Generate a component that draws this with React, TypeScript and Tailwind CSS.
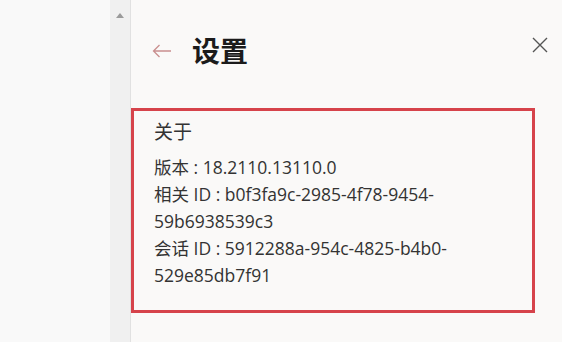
import React from "react";

const font = { fontFamily: '"Open Sans", "Noto Sans CJK SC", sans-serif' };

const rows = [
  "版本 : 18.2110.13110.0",
  "相关 ID : b0f3fa9c-2985-4f78-9454-",
  "59b6938539c3",
  "会话 ID : 5912288a-954c-4825-b4b0-",
  "529e85db7f91",
];

export default function App() {
  return (
    <div className="flex h-[342px] w-[562px] overflow-hidden bg-[#f8f8f8]" style={font}>
      <div className="w-[110px] bg-[#f9f9f9]" />
      {/* scrollbar */}
      <div className="flex w-[20px] justify-center bg-[#f0f0f0] pt-[13px]">
        <div className="h-0 w-0 border-x-[4px] border-b-[5px] border-x-transparent border-b-[#9a9a9a]" />
      </div>
      <div className="flex-1 border-l border-[#e1e1e1] bg-[#faf9f8]">
        <div className="flex items-center pl-[21px] pr-[13px] pt-[34px]">
          <svg width="20" height="14" viewBox="0 0 20 14" fill="none" stroke="#c98f8f" strokeWidth="1.3">
            <path d="M19 7H1.5M7.5 1L1.5 7l6 6" />
          </svg>
          <h1 className="ml-[20px] text-[28px] font-bold leading-[34px] text-[#1b1b1b]">设置</h1>
          <svg className="ml-auto -mt-[12px]" width="18" height="18" viewBox="0 0 18 18" stroke="#555" strokeWidth="1.4">
            <path d="M2 2l14 14M16 2L2 16" />
          </svg>
        </div>
        <div className="mt-[40px] h-[205px] w-[404px] border-[3px] border-[#d6434b] pl-[20px] pt-[6px] text-[#333]">
          <h2 className="text-[19px] leading-[30px]">关于</h2>
          <div className="mt-[7px] text-[17.5px] leading-[27px]">
            {rows.map((r) => (
              <div key={r}>{r}</div>
            ))}
          </div>
        </div>
      </div>
    </div>
  );
}
